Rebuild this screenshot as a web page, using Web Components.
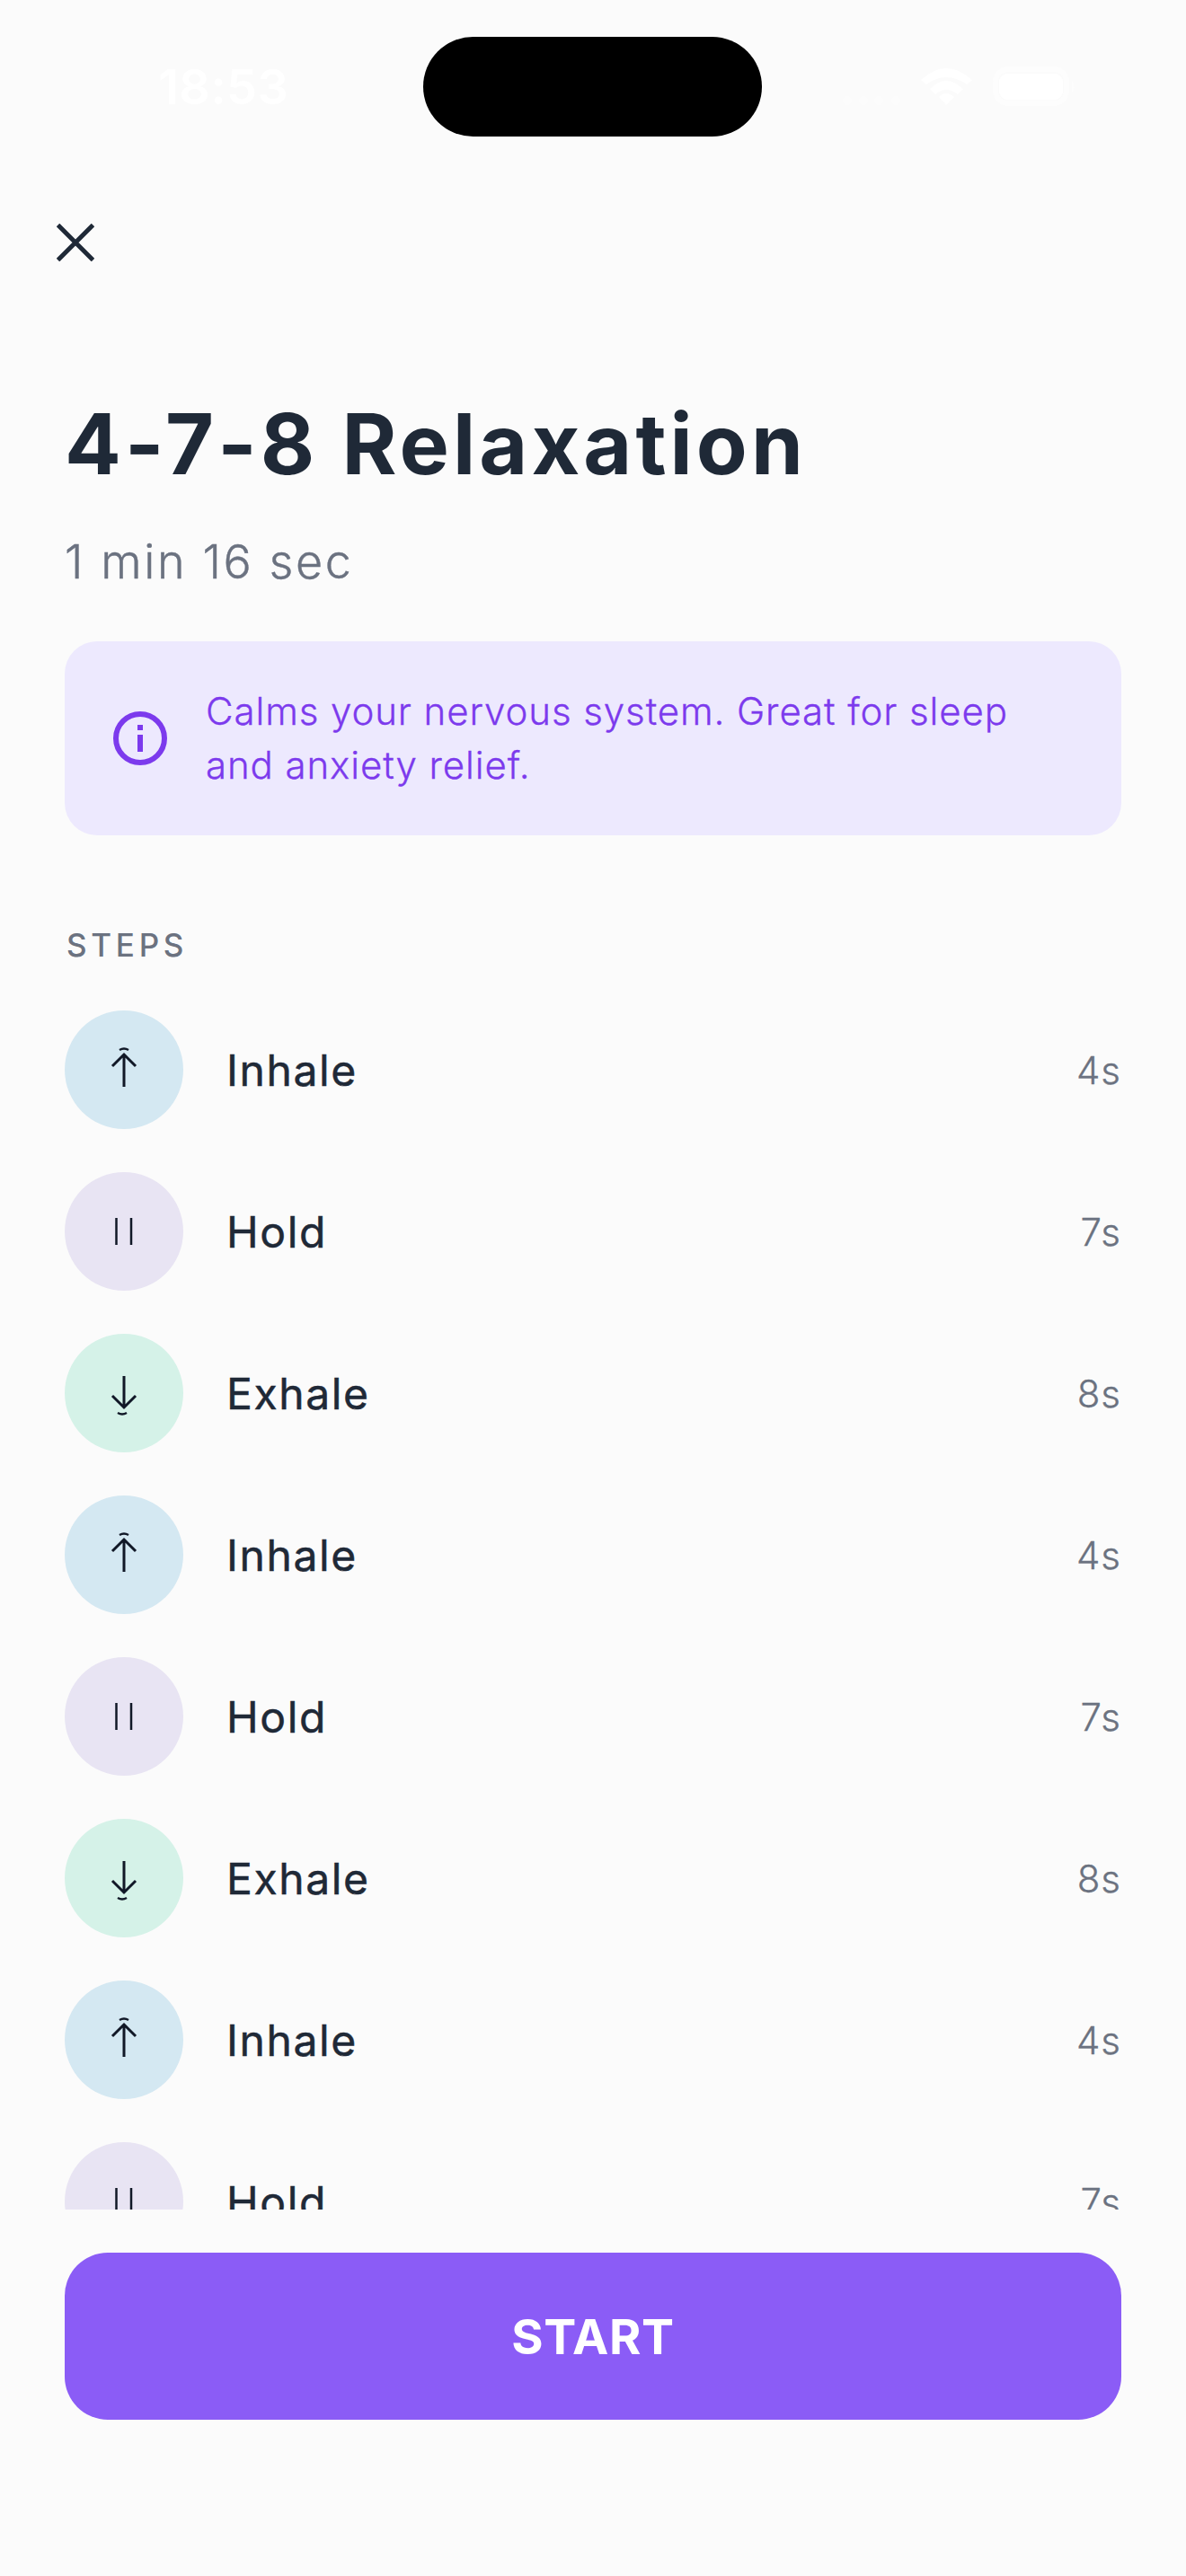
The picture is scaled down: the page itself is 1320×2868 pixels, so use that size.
<!DOCTYPE html>
<html lang="en">
<head>
<meta charset="utf-8">
<title>4-7-8 Relaxation</title>
<style>
  html, body { margin: 0; height: 100%; background: #fbfbfb; }
  body { font-family: Inter, "Liberation Sans", sans-serif; }
</style>
</head>
<body>
<breath-screen>
  <status-bar slot="status"></status-bar>
  <close-button slot="close"></close-button>
  <breath-header slot="header" name="4-7-8 Relaxation" duration="1 min 16 sec"></breath-header>
  <info-card slot="info">Calms your nervous system. Great for sleep and anxiety relief.</info-card>
  <step-row kind="inhale" seconds="4"></step-row>
  <step-row kind="hold" seconds="7"></step-row>
  <step-row kind="exhale" seconds="8"></step-row>
  <step-row kind="inhale" seconds="4"></step-row>
  <step-row kind="hold" seconds="7"></step-row>
  <step-row kind="exhale" seconds="8"></step-row>
  <step-row kind="inhale" seconds="4"></step-row>
  <step-row kind="hold" seconds="7"></step-row>
  <start-button slot="footer">START</start-button>
</breath-screen>

<script>
class BreathScreen extends HTMLElement {
    constructor() {
        super();
        this.attachShadow({ mode: "open" });
        this.shadowRoot.innerHTML = /*html*/`
            <style>
                :host {
                    display: flex;
                    flex-direction: column;
                    height: 2868px;
                    box-sizing: border-box;
                    position: relative;
                    overflow: hidden;
                }
                .pad { padding: 0 72px; }
                .label {
                    margin-top: 102px;
                    font-size: 35px;
                    line-height: 40px;
                    font-weight: 500;
                    letter-spacing: 4.7px;
                    color: #6b7280;
                    padding-left: 2px;
                }
                .steps {
                    height: 1335px;
                    margin-top: 53px;
                    overflow: hidden;
                    display: flex;
                    flex-direction: column;
                    gap: 48px;
                }
            </style>
            <slot name="status"></slot>
            <slot name="close"></slot>
            <div class="pad">
                <slot name="header"></slot>
                <slot name="info"></slot>
                <div class="label">STEPS</div>
                <div class="steps"><slot></slot></div>
                <slot name="footer"></slot>
            </div>
        `;
    }
}

class StatusBar extends HTMLElement {
    constructor() {
        super();
        this.attachShadow({ mode: "open" });
        this.shadowRoot.innerHTML = /*html*/`
            <style>
                :host {
                    display: flex;
                    justify-content: space-between;
                    align-items: flex-start;
                    height: 193px;
                    padding: 66px 120px 0 176px;
                    box-sizing: border-box;
                    color: #fff;
                }
                .time {
                    font-size: 54px;
                    font-weight: 600;
                    line-height: 62px;
                    letter-spacing: 0.5px;
                }
                .island {
                    position: absolute;
                    left: 471px;
                    top: 41px;
                    width: 377px;
                    height: 111px;
                    border-radius: 56px;
                    background: #000;
                }
                svg { display: block; margin-top: 4px; }
            </style>
            <span class="time">18:53</span>
            <div class="island"></div>
            <svg width="263" height="50" viewBox="937 70 263 50" fill="#fff">
                <g fill="#fcfcfc">
                    <circle cx="943" cy="112" r="5"/><circle cx="961" cy="112" r="5"/>
                    <circle cx="978" cy="112" r="5"/><circle cx="997" cy="112" r="5"/>
                </g>
                <path d="M1025 89 L1031 94 Q1053 78 1076 94 L1082 89 Q1053 63 1025 89Z
                         M1035 99 L1041 105 Q1053 95 1066 105 L1072 99 Q1053 81 1035 99Z
                         M1045 108 L1053 117 L1062 108 Q1053 100 1045 108Z"/>
                <rect x="1108" y="77" width="79" height="38" rx="14" fill="none" stroke="#fdfdfd" stroke-width="6"/>
                <rect x="1112" y="82" width="71" height="29" rx="9"/>
                <path d="M1193 90 Q1198 96 1193 103Z" fill="#fdfdfd"/>
            </svg>
        `;
    }
}

class CloseButton extends HTMLElement {
    constructor() {
        super();
        this.attachShadow({ mode: "open" });
        this.shadowRoot.innerHTML = /*html*/`
            <style>
                :host { display: block; padding: 56px 0 0 63px; height: 43px; }
                svg { display: block; }
            </style>
            <svg width="42" height="42" viewBox="0 0 42 42" fill="none" stroke="#1f2937" stroke-width="5">
                <path d="M1.5 1.5 40.5 40.5M40.5 1.5 1.5 40.5"/>
            </svg>
        `;
    }
}

class BreathHeader extends HTMLElement {
    constructor() {
        super();
        this.attachShadow({ mode: "open" });
        const title = this.getAttribute("name");
        const duration = this.getAttribute("duration");
        this.shadowRoot.innerHTML = /*html*/`
            <style>
                :host { display: block; padding-top: 144px; }
                h1 {
                    margin: 0;
                    font-size: 93px;
                    line-height: 116px;
                    font-weight: 700;
                    letter-spacing: 4.1px;
                    color: #1f2937;
                }
                p {
                    margin: 41px 0 0;
                    font-size: 52px;
                    line-height: 66px;
                    font-weight: 300;
                    -webkit-text-stroke: 0.4px #6b7280;
                    letter-spacing: 2.6px;
                    color: #6b7280;
                }
            </style>
            <h1>${title}</h1>
            <p>${duration}</p>
        `;
    }
}

class InfoCard extends HTMLElement {
    constructor() {
        super();
        this.attachShadow({ mode: "open" });
        this.shadowRoot.innerHTML = /*html*/`
            <style>
                :host {
                    display: flex;
                    align-items: center;
                    gap: 43px;
                    margin-top: 55px;
                    height: 216px;
                    padding: 0 54px;
                    box-sizing: border-box;
                    border-radius: 36px;
                    background: #ede9fe;
                    color: #7c3aed;
                    font-size: 42px;
                    line-height: 60px;
                    font-weight: 300;
                    -webkit-text-stroke: 0.3px #7c3aed;
                    letter-spacing: 0.9px;
                }
                svg { flex: none; display: block; }
            </style>
            <svg width="60" height="60" viewBox="0 0 60 60" fill="none" stroke="#7c3aed">
                <circle cx="30" cy="30" r="27" stroke-width="6"/>
                <path d="M30 26v19" stroke-width="6"/>
                <path d="M30 15v6" stroke-width="6"/>
            </svg>
            <div><slot></slot></div>
        `;
    }
}

const STEP_KINDS = {
    inhale: {
        label: "Inhale",
        bg: "#d4e8f2",
        icon: `<path d="M66 85V49M53 62 66 49 79 62"/><path d="M61 44Q66 41 71 44" stroke-width="2.5"/>`
    },
    hold: {
        label: "Hold",
        bg: "#e8e4f3",
        icon: `<path d="M57.5 51V81M74 51V81" stroke-width="2.5"/>`
    },
    exhale: {
        label: "Exhale",
        bg: "#d5f2e8",
        icon: `<path d="M66 47V82M53 69 66 82 79 69"/><path d="M59 88Q64 91 69 88" stroke-width="2.5"/>`
    }
};

class StepRow extends HTMLElement {
    constructor() {
        super();
        this.attachShadow({ mode: "open" });
        const kind = STEP_KINDS[this.getAttribute("kind")];
        this.shadowRoot.innerHTML = /*html*/`
            <style>
                :host {
                    display: flex;
                    align-items: center;
                    flex: none;
                    height: 132px;
                }
                .dot {
                    flex: none;
                    width: 132px;
                    height: 132px;
                    border-radius: 50%;
                    background: ${kind.bg};
                }
                svg { display: block; }
                .name {
                    flex: 1;
                    margin-left: 48px;
                    font-size: 48px;
                    font-weight: 400;
                    -webkit-text-stroke: 0.5px #1f2937;
                    letter-spacing: 1.6px;
                    color: #1f2937;
                }
                .secs {
                    font-size: 42px;
                    font-weight: 300;
                    -webkit-text-stroke: 0.3px #6b7280;
                    letter-spacing: 1px;
                    color: #6b7280;
                }
            </style>
            <div class="dot">
                <svg width="132" height="132" viewBox="0 0 132 132" fill="none" stroke="#111827" stroke-width="3">${kind.icon}</svg>
            </div>
            <span class="name">${kind.label}</span>
            <span class="secs">${this.getAttribute("seconds")}s</span>
        `;
    }
}

class StartButton extends HTMLElement {
    constructor() {
        super();
        this.attachShadow({ mode: "open" });
        this.shadowRoot.innerHTML = /*html*/`
            <style>
                :host {
                    display: flex;
                    align-items: center;
                    justify-content: center;
                    margin-top: 48px;
                    height: 186px;
                    border-radius: 48px;
                    background: #8b5cf6;
                    color: #fff;
                    font-size: 54px;
                    font-weight: 700;
                    letter-spacing: 0.6px;
                }
            </style>
            <slot></slot>
        `;
    }
}

customElements.define("breath-screen", BreathScreen);
customElements.define("status-bar", StatusBar);
customElements.define("close-button", CloseButton);
customElements.define("breath-header", BreathHeader);
customElements.define("info-card", InfoCard);
customElements.define("step-row", StepRow);
customElements.define("start-button", StartButton);
</script>
</body>
</html>
